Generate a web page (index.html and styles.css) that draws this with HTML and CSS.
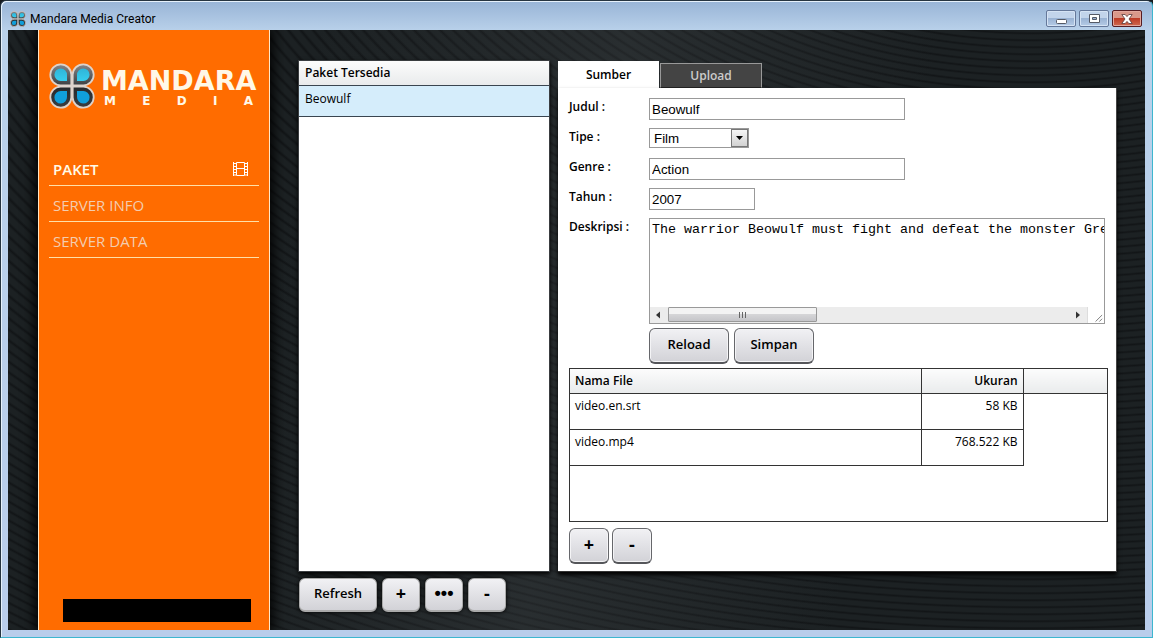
FILE: index.html
```html
<!DOCTYPE html>
<html lang="id">
<head>
<meta charset="utf-8">
<title>Mandara Media Creator</title>
<link rel="stylesheet" href="styles.css">
</head>
<body>
<svg width="0" height="0" class="defs" aria-hidden="true">
  <defs>
    <linearGradient id="shell" x1="0" y1="0" x2="0" y2="1"><stop offset="0" stop-color="#85878a"/><stop offset="1" stop-color="#3c3f42"/></linearGradient>
    <linearGradient id="shell-low" x1="0" y1="0" x2="0" y2="1"><stop offset="0" stop-color="#26292c"/><stop offset="1" stop-color="#3a3d40"/></linearGradient>
    <linearGradient id="drop" x1="0" y1="0" x2="0" y2="1"><stop offset="0" stop-color="#2fb4d8"/><stop offset="1" stop-color="#36cdee"/></linearGradient>
    <symbol id="clover" viewBox="0 0 46 46">
      <g stroke="#ddd3cc" stroke-width="1.800">
        <path fill="url(#shell)" d="M22.300 22.300H11.500A10.500 10.500 0 1 1 22.300 11.500Z"/>
        <path fill="url(#shell)" d="M23.700 22.300H34.500A10.500 10.500 0 1 0 23.700 11.500Z"/>
        <path fill="url(#shell-low)" d="M22.300 23.700H11.500A10.500 10.500 0 1 0 22.300 34.500Z"/>
        <path fill="url(#shell-low)" d="M23.700 23.700H34.500A10.500 10.500 0 1 1 23.700 34.500Z"/>
      </g>
      <path fill="url(#drop)" d="M18 18H12A6.300 6.300 0 1 1 18 12Z"/>
      <path fill="url(#drop)" d="M28 18H34A6.300 6.300 0 1 0 28 12Z"/>
      <path fill="#109fdb" d="M18 28H12A6.300 6.300 0 1 0 18 34Z"/>
      <path fill="#109fdb" d="M28 28H34A6.300 6.300 0 1 1 28 34Z"/>
    </symbol>
  </defs>
</svg>
<div class="window">
  <header class="titlebar">
    <svg class="app-icon" aria-hidden="true"><use href="#clover"/></svg>
    <span class="title">Mandara Media Creator</span>
    <div class="controls">
      <button class="ctl" aria-label="Minimize"><svg width="12" height="12" viewBox="0 0 12 12"><rect x="1.500" y="6.500" width="10" height="4" rx="1" fill="#fff" stroke="#555a66"/></svg></button>
      <button class="ctl" aria-label="Maximize"><svg width="12" height="12" viewBox="0 0 12 12"><path fill="#fff" fill-rule="evenodd" stroke="#555a66" d="M1.500 1.500h10v8h-10zM4.500 4.500v2h4v-2z"/></svg></button>
      <button class="ctl close" aria-label="Close"><svg width="12" height="12" viewBox="0 0 12 12"><path fill="#fff" stroke="#5b3a3a" stroke-width=".8" d="M.8 1.500h3.400L6 3.600l1.800-2.100h3.400L8 6l3.200 4.500H7.800L6 8.400l-1.800 2.100H.8L4 6z"/></svg></button>
    </div>
  </header>
  <div class="content">
    <aside class="sidebar">
      <div class="brand">
        <svg class="logo" aria-hidden="true"><use href="#clover"/></svg>
        <div class="wordmark"><div class="word">MANDARA</div><div class="subword">M E D I A</div></div>
      </div>
      <nav class="menu">
        <a href="#" class="active">PAKET
          <svg width="15" height="14" viewBox="0 0 15 14" aria-hidden="true"><path fill="none" stroke="#fff" d="M.5 0v14M3.500 .5v13M11.500 .5v13M14.500 0v14M3.500 .5h8M3.500 6.500h8M3.500 13.500h8M0 1.500h3M0 4.500h3M0 7.500h3M0 10.500h3M0 13h3M12 1.500h3M12 4.500h3M12 7.500h3M12 10.500h3M12 13h3"/></svg></a>
        <a href="#">SERVER INFO</a>
        <a href="#">SERVER DATA</a>
      </nav>
      <div class="status"></div>
    </aside>
    <main class="main">
      <div class="panels">
        <section class="list">
          <h2 class="list-head">Paket Tersedia</h2>
          <button class="list-item">Beowulf</button>
        </section>
        <section class="detail">
          <div class="tabs" role="tablist">
            <button class="tab selected" role="tab" aria-selected="true">Sumber</button>
            <button class="tab" role="tab" aria-selected="false">Upload</button>
          </div>
          <div class="sheet">
            <form class="form">
              <label for="judul">Judul :</label><input id="judul" class="wide" type="text" value="Beowulf">
              <label for="tipe">Tipe :</label>
              <div class="select"><select id="tipe"><option>Film</option></select><span class="arrow"><svg width="7" height="4" viewBox="0 0 7 4"><path d="M0 0h7L3.500 4z"/></svg></span></div>
              <label for="genre">Genre :</label><input id="genre" class="wide" type="text" value="Action">
              <label for="tahun">Tahun :</label><input id="tahun" class="short" type="text" value="2007">
              <label for="desk">Deskripsi :</label>
              <div class="area">
                <textarea id="desk" wrap="off">The warrior Beowulf must fight and defeat the monster Grendel</textarea>
                <div class="scroll" aria-hidden="true">
                  <svg width="18" height="16" viewBox="0 0 18 16"><path fill="#333" d="M10 4.500v7L6 8z"/></svg>
                  <div class="track"><div class="thumb"><i></i><i></i><i></i></div></div>
                  <svg width="18" height="16" viewBox="0 0 18 16"><path fill="#333" d="M7 4.500v7L11 8z"/></svg>
                  <svg class="grip" width="17" height="16" viewBox="0 0 17 16"><path stroke="#777" fill="none" d="M8 15l7-7M12 15l3-3"/></svg>
                </div>
              </div>
              <div class="actions"><button type="button" class="btn text">Reload</button><button type="button" class="btn text">Simpan</button></div>
            </form>
            <div class="files">
              <table>
                <thead><tr><th>Nama File</th><th class="size">Ukuran</th><th class="rest"></th></tr></thead>
                <tbody>
                  <tr><td>video.en.srt</td><td class="size">58 KB</td><td class="rest"></td></tr>
                  <tr><td>video.mp4</td><td class="size">768.522 KB</td><td class="rest"></td></tr>
                </tbody>
              </table>
            </div>
            <div class="file-actions"><button class="btn sym">+</button><button class="btn sym">-</button></div>
          </div>
        </section>
      </div>
      <div class="toolbar"><button class="btn text">Refresh</button><button class="btn sym">+</button><button class="btn sym dots">•••</button><button class="btn sym">-</button></div>
    </main>
  </div>
</div>
</body>
</html>
```
FILE: styles.css
```css
* { box-sizing: border-box; }
body { margin: 0; background: #15191c; font-family: "Open Sans", "Noto Sans", sans-serif; font-size: 12px; color: #000; }
button { font-family: inherit; color: inherit; cursor: pointer; }
.defs { position: absolute; }
.window {
  display: flex; flex-direction: column; min-height: 100vh; padding: 0 7px 7px;
  border: 1px solid #263440; border-right-color: #3db6cf; border-bottom-color: #3db6cf;
  border-radius: 6px 6px 0 0;
  background: linear-gradient(#98b4d6, #b9d1ea 30px, #b9cdeb);
  box-shadow: inset 1px 1px #e6f1fb;
}
.titlebar { display: flex; align-items: center; height: 29px; padding: 6px 3px 0 2px; }
.app-icon { width: 16px; height: 16px; margin-right: 4px; }
.title { flex: 1; line-height: 16px; font-family: Roboto, sans-serif; font-size: 12px; }
.controls { display: flex; gap: 3px; }
.ctl {
  display: flex; align-items: center; justify-content: center; width: 30px; height: 17px; padding: 0;
  border: 1px solid #65789a; border-radius: 2px; box-shadow: inset 0 0 0 1px #d5e3f4;
  background: linear-gradient(#c2d4eb 50%, #9ab3d4 50%, #b5cbe6);
}
.ctl.close { border-color: #551c22; box-shadow: inset 0 0 0 1px #e2a89d; background: linear-gradient(#d9988a 50%, #bd3b25 50%, #cf6a50); }
.content {
  display: flex; flex: 1; padding-left: 30px;
  background:
    linear-gradient(100deg, #50555800 25%, #50555840 50%, #50555800 75%),
    repeating-radial-gradient(ellipse 11px 7px at 90% -40%, #1c2123 0, #1c2123 50%, #121517 75%, #1c2123 100%);
}
.sidebar {
  display: flex; flex-direction: column; flex: none; width: 232px; padding: 33px 10px 8px;
  background: #ff6c00; border: solid #ffe8c8; border-width: 0 1px; box-shadow: 0 0 12px 3px #000;
  clip-path: inset(0 -20px);
}
.brand { display: flex; align-items: flex-start; gap: 6px; }
.logo { width: 46px; height: 46px; flex: none; }
.wordmark { flex: none; width: 155px; padding-top: 4px; color: #fff8e8; font-family: "DejaVu Sans", sans-serif; font-weight: bold; }
.word { font-size: 27px; line-height: 28px; }
.subword { padding: 0 3px; font-size: 12px; line-height: 13px; text-align-last: justify; }
.menu { display: flex; flex-direction: column; margin-top: 41px; }
.menu a {
  display: flex; align-items: center; justify-content: space-between; height: 36px; padding: 2px 11px 0 4px;
  border-bottom: 1px solid #ffe0a8; color: #f3cdb0; font-size: 15px; text-decoration: none;
}
.menu .active { color: #fffbe8; font-weight: 600; }
.status { height: 23px; margin: auto 8px 0 14px; background: #000; }
.main { display: flex; flex-direction: column; flex: 1; min-width: 0; padding: 30px 28px 18px; gap: 6px; }
.panels { display: flex; flex: 1; gap: 8px; }
.list { flex: none; width: 252px; background: #fff; border: 1px solid #3a3d40; box-shadow: 0 2px 4px #000; }
.list-head { margin: 0; height: 25px; padding: 0 6px; line-height: 24px; font-size: 12px; font-weight: 600; background: linear-gradient(#fcfcfc, #e9ebec); border-bottom: 1px solid #3a4550; }
.list-item { display: block; width: 100%; height: 31px; padding: 0 6px 6px; border: 0; border-bottom: 1px solid #3a4550; background: #d5edfb; text-align: left; font-size: 12px; }
.detail { display: flex; flex-direction: column; flex: 1; min-width: 0; padding-top: 1px; }
.tabs { display: flex; align-items: flex-end; height: 27px; gap: 1px; }
.tab { width: 102px; height: 25px; padding: 0; border: 1px solid #999; border-bottom-color: #222; background: #444; color: #ccc; font-size: 12px; font-weight: 600; }
.tab.selected { width: 101px; height: 27px; border: 0; background: #fff; color: #000; }
.sheet { display: flex; flex-direction: column; flex: 1; padding: 10px 8px 7px 11px; background: #fff; border-right: 1px solid #444; border-bottom: 1px solid #333; box-shadow: 0 3px 4px #000; }
.form { display: grid; grid-template-columns: 80px 1fr; grid-template-rows: repeat(4, 30px) 110px 40px; margin-right: 3px; align-items: start; }
.form label { line-height: 18px; font-weight: 600; }
.form input, .select, .area { border: 1px solid #999; background: #fff; }
.form input { height: 22px; padding: 1px 2px; font-family: "Liberation Sans", Arial, sans-serif; }
.form .wide { width: 256px; }
.form .short { width: 106px; }
.select { position: relative; width: 100px; height: 20px; }
.select select { width: 100%; height: 18px; padding: 0 4px; border: 0; appearance: none; background: #fff; font-family: "Liberation Sans", Arial, sans-serif; }
.arrow { position: absolute; top: 0; right: 0; display: flex; align-items: center; justify-content: center; width: 17px; height: 18px; border: 1px solid #777; background: linear-gradient(#f5f5f5, #d2d2d2); pointer-events: none; }
.area { display: flex; flex-direction: column; height: 106px; }
.area textarea { flex: 1; min-height: 0; padding: 3px 2px; border: 0; resize: none; overflow: hidden; outline: 0; font-family: "Liberation Mono", "Courier New", monospace; }
.scroll { display: flex; height: 16px; background: #ececec; }
.track { flex: 1; }
.thumb { display: flex; justify-content: center; align-items: center; gap: 2px; width: 149px; height: 15px; border: 1px solid #999; border-radius: 1px; background: linear-gradient(#f3f3f3 45%, #d5d5d7 50%, #c5c5c9); }
.thumb i { width: 1px; height: 6px; background: #666; }
.grip { background: #fff; border-left: 1px solid #ddd; }
.actions { grid-column: 2; display: flex; gap: 5px; }
.btn {
  height: 36px; padding: 0 0 3px; border: 1px solid #66676b; border-bottom: 2px solid #55565a; border-radius: 6px;
  background: linear-gradient(#f1f1f4, #d2d2d7); box-shadow: inset 0 0 0 1px #f4f4f6;
}
.btn.text { width: 80px; font-size: 13px; font-weight: 600; }
.btn.sym { width: 40px; font-size: 18px; font-weight: bold; line-height: 18px; }
.btn.dots { font-family: "Liberation Sans", sans-serif; font-size: 18px; }
.files { flex: 1; border: 1px solid #333; }
table { width: 100%; border-collapse: collapse; table-layout: fixed; }
th { height: 24px; padding: 0 5px; text-align: left; font-weight: 600; background: linear-gradient(#fcfcfc, #e9ebec); border-bottom: 1px solid #333; border-right: 1px solid #333; }
td { height: 36px; padding: 3px 5px; vertical-align: top; border-bottom: 1px solid #333; border-right: 1px solid #333; }
.size { width: 102px; text-align: right; }
.rest { width: 84px; border-right: 0; }
td.rest { border-bottom: 0; }
.file-actions { display: flex; gap: 3px; margin-top: 6px; }
.toolbar { display: flex; gap: 5px; }
.toolbar .btn { border-color: #aaa; height: 34px; box-shadow: 0 0 4px #000; }
.toolbar .text { width: 78px; margin-left: 1px; }
.toolbar .sym { width: 38px; }
```
